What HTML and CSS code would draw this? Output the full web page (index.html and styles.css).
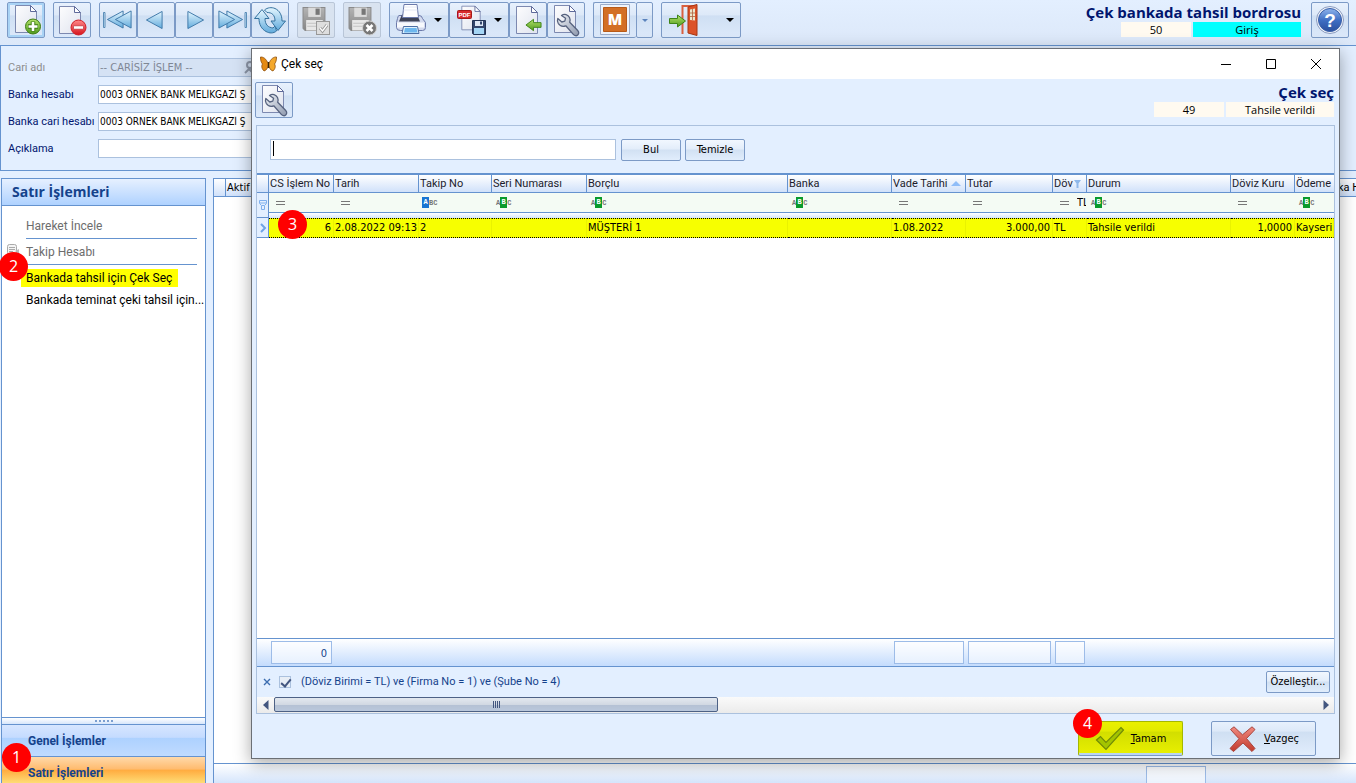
FILE: index.html
```html
<!DOCTYPE html>
<html lang="tr">
<head>
<meta charset="utf-8">
<title>Çek bankada tahsil bordrosu</title>
<link rel="stylesheet" href="styles.css">
</head>
<body>
<svg class="defs" aria-hidden="true">
  <defs>
    <linearGradient id="gPage" x1="0" y1="0" x2="1" y2="1"><stop offset="0" stop-color="#fdfdfe"/><stop offset="1" stop-color="#dfe3ee"/></linearGradient>
    <linearGradient id="gBlue" x1="0" y1="0" x2="0" y2="1"><stop offset="0" stop-color="#e4f6ff"/><stop offset="1" stop-color="#62abdc"/></linearGradient>
    <linearGradient id="gGreen" x1="0" y1="0" x2="0" y2="1"><stop offset="0" stop-color="#b4e36a"/><stop offset="1" stop-color="#4f9a1c"/></linearGradient>
    <linearGradient id="gRed" x1="0" y1="0" x2="0" y2="1"><stop offset="0" stop-color="#ff8a8a"/><stop offset="1" stop-color="#d6141d"/></linearGradient>
    <linearGradient id="gCross" x1="0" y1="0" x2="0" y2="1"><stop offset="0" stop-color="#f08a80"/><stop offset="1" stop-color="#c23a2c"/></linearGradient>
    <linearGradient id="gSteel" x1="0" y1="0" x2="1" y2="1"><stop offset="0" stop-color="#eef1f6"/><stop offset="1" stop-color="#8e99ae"/></linearGradient>
    <linearGradient id="gHelp" x1="0" y1="0" x2="0" y2="1"><stop offset="0" stop-color="#8fb4ec"/><stop offset=".5" stop-color="#3f6fc4"/><stop offset="1" stop-color="#2a4f9e"/></linearGradient>
    <linearGradient id="gGrey" x1="0" y1="0" x2="0" y2="1"><stop offset="0" stop-color="#b4b4b4"/><stop offset="1" stop-color="#858585"/></linearGradient>
    <symbol id="page" viewBox="0 0 32 32"><path d="M5.500 2.500h15l6 6v21h-21z" fill="url(#gPage)" stroke="#7d89b0"/><path d="M20.500 2.500v6h6z" fill="#fff" stroke="#5f6a9a"/></symbol>
    <symbol id="wrench" viewBox="0 0 32 34"><path d="M13.500 12.500c3-2 6.500-1 8 2 .8 1.700.8 3.300.2 4.800l8 8.200c1.500 1.600 1.200 3.400 0 4.500s-3 1-4.400-.6l-7.500-8.600c-3 1-6 .2-7.600-2.600-.8-1.500-.9-3.300-.4-4.700l4 3.500 3-.8.8-3z" fill="url(#gSteel)" stroke="#56627e" stroke-width="1.300" stroke-linejoin="round"/></symbol>
    <symbol id="disk" viewBox="0 0 24 24"><path d="M1 1h21v22H3l-2-2z" fill="url(#gGrey)" stroke="#8a8a8a"/><path d="M6 1h12v9H6z" fill="#dcdcdc"/><path d="M13 2h4v6h-4z" fill="#777"/><path d="M4 13h16v10H4z" fill="#e8e8e8"/><path d="M5 16h14M5 19h14" stroke="#c2c2c2"/></symbol>
    <symbol id="left" viewBox="0 0 20 20"><path d="M18 1v18L1.500 10z" fill="url(#gBlue)" stroke="#3d77a8" stroke-linejoin="round"/></symbol>
    <symbol id="funnel" viewBox="0 0 8 10"><path d="M.5.500h7v3l-2 2v4h-3v-4l-2-2zM1 3h6M3 5.500h2" fill="none" stroke="#7fb0ee"/></symbol>
    <symbol id="garrow" viewBox="0 0 18 14"><path d="M1 7l8-6v3.500h8v5H9V13z" fill="url(#gGreen)" stroke="#3f8418"/></symbol>
  </defs>
</svg>

<header class="toolbar">
  <div class="tools">
    <button class="tool hot" aria-label="Yeni"><svg viewBox="0 0 36 34"><use href="#page" x="2" y="0" width="32" height="32"/><circle cx="25" cy="23.500" r="7.500" fill="url(#gGreen)" stroke="#3f7d15"/><path d="M25 18.500v10M20 23.500h10" stroke="#3f7d15" stroke-width="4.500"/><path d="M25 19v9M20.500 23.500h9" stroke="#fff" stroke-width="2.600"/></svg></button>
    <button class="tool" aria-label="Sil"><svg viewBox="0 0 36 34"><use href="#page" x="0" y="1" width="32" height="32"/><circle cx="24.500" cy="24.500" r="7.500" fill="url(#gRed)" stroke="#d02028"/><rect x="19.500" y="22.800" width="10" height="3.400" rx=".5" fill="#fff" stroke="#b51820" stroke-width=".6"/></svg></button>
    <div class="group">
      <button class="tool" aria-label="İlk"><svg viewBox="0 0 36 34"><path d="M3.500 9.500h1.500v15H3.500z" fill="#cfeafa" stroke="#3d77a8" stroke-width=".8"/><use href="#left" x="6" y="7" width="19" height="19"/><use href="#left" x="14" y="7" width="19" height="19"/></svg></button>
      <button class="tool" aria-label="Önceki"><svg viewBox="0 0 36 34"><use href="#left" x="7" y="7" width="19" height="20"/></svg></button>
      <button class="tool" aria-label="Sonraki"><svg class="mirror" viewBox="0 0 36 34"><use href="#left" x="7" y="7" width="19" height="20"/></svg></button>
      <button class="tool" aria-label="Son"><svg class="mirror" viewBox="0 0 36 34"><path d="M3.500 9.500h1.500v15H3.500z" fill="#cfeafa" stroke="#3d77a8" stroke-width=".8"/><use href="#left" x="6" y="7" width="19" height="19"/><use href="#left" x="14" y="7" width="19" height="19"/></svg></button>
      <button class="tool" aria-label="Yenile"><svg viewBox="0 0 36 34"><g fill="url(#gBlue)" stroke="#35729f" stroke-linejoin="round"><path d="M2.500 15.500L10 6.500l7 9h-4c0 6 3 9 8 9.500l2-2 1.500 5c-3 2.500-7 2.500-10.500.5-4.500-2.500-7-7-7-13z"/><path d="M33.500 18L26 27.500 19 18h4c0-6-3-8.500-8-8.500L12.500 7c3-2.500 7-3 10.500-1.500 4.500 2 7 6.500 7 12.500z"/></g></svg></button>
    </div>
    <button class="tool" disabled aria-label="Kaydet"><svg viewBox="0 0 36 34"><use href="#disk" x="4" y="3" width="25" height="26"/><rect x="18.500" y="18.500" width="13" height="13" fill="#dedede" stroke="#999"/><path d="M22 25l2.500 3 4.500-6" fill="none" stroke="#999" stroke-width="3"/><path d="M22 25l2.500 3 4.500-6" fill="none" stroke="#fff" stroke-width="1.300"/></svg></button>
    <button class="tool" disabled aria-label="Vazgeç"><svg viewBox="0 0 36 34"><use href="#disk" x="4" y="3" width="25" height="26"/><circle cx="25.500" cy="25" r="7" fill="#777" stroke="#d0d0d0"/><path d="M22.500 22l6 6M28.500 22l-6 6" stroke="#fff" stroke-width="2.600"/></svg></button>
    <div class="group">
      <button class="tool drop" aria-label="Yazdır"><svg viewBox="0 0 36 34"><path d="M9 12.500h20q3 0 3.500 3l3 4v5q0 3-3 3h-22q-4 0-4-3v-5l1-4q.5-3 1.500-3z" fill="#d3daee" stroke="#6c7aaa"/><path d="M12 11.500h15l3 7H9z" fill="#3e4356"/><path d="M14 1.500h13l1.500 13h-16z" fill="#fff" stroke="#6c7aaa"/><path d="M14 4h13M13.500 7h14" stroke="#e4e8f3"/><path d="M7 19.500h27v5H7z" fill="#f7f9fd"/><path d="M13.500 23.500h14l1.500 7h-17z" fill="#dff1fd" stroke="#4c6ea3"/><path d="M15 25h11.500l1 4.500h-13.500z" fill="#6db7ee"/></svg><i class="caret"></i></button>
      <button class="tool drop" aria-label="PDF kaydet"><svg viewBox="0 0 36 34"><use href="#page" x="7" y="0" width="28" height="30"/><rect x="7.500" y="7.500" width="14" height="8" rx="1" fill="#d92c2c" stroke="#a61818"/><text class="pdf" x="8.500" y="14">PDF</text><path d="M22.500 17.500h13v14h-12l-1-1z" fill="#33456b" stroke="#223354"/><path d="M25 18h8v5h-8z" fill="#dfe8f5"/><path d="M30 18.500h2v3h-2z" fill="#33456b"/><path d="M24 25h10v6H24z" fill="#a5d6f5"/></svg><i class="caret"></i></button>
      <button class="tool" aria-label="İçe al"><svg viewBox="0 0 36 34"><use href="#page" x="1" y="1" width="32" height="32"/><use href="#garrow" x="15" y="15" width="17" height="14"/></svg></button>
      <button class="tool" aria-label="Ayarlar"><svg viewBox="0 0 36 34"><use href="#page" x="1" y="0" width="32" height="32"/><use href="#wrench" x="0" y="0" width="32" height="34"/></svg></button>
    </div>
    <div class="group">
      <button class="tool split" aria-label="M"><svg viewBox="0 0 36 34"><path d="M3.500 1.500h29v30h-29z" fill="#eef3fb" stroke="#9dacc8"/><path d="M6.500 4.500h23v24h-23z" fill="#d36f25" stroke="#b85a18"/><text class="mlogo" x="18" y="22" text-anchor="middle">M</text></svg></button>
      <button class="tool arrow" aria-label="Seçenekler"><i class="caret blue"></i></button>
    </div>
    <button class="tool drop exit" aria-label="Çıkış"><svg viewBox="0 0 36 34"><path d="M20.500 31V3H34" fill="none" stroke="#d96040" stroke-width="2"/><path d="M26 4l9-2.500v31L26 30z" fill="#dc5228" stroke="#a83612"/><path d="M28 6.500l5-1v12l-5-.5z" fill="#ece6cc"/><path d="M30.500 6v11M28 10h5M28 13.500h5" stroke="#b0623d" stroke-width=".8"/><path d="M23.500 18l-8-6v3.500h-8v5h8V24z" fill="url(#gGreen)" stroke="#3f8418"/></svg><i class="caret"></i></button>
  </div>
  <div class="status">
    <h1 class="title">Çek bankada tahsil bordrosu</h1>
    <div class="tags"><span class="tag num">50</span><span class="tag cyan">Giriş</span></div>
  </div>
  <button class="tool help" aria-label="Yardım"><svg viewBox="0 0 36 34"><circle cx="18" cy="17" r="13.500" fill="#f2f5fa" stroke="#8a9bc0"/><circle cx="18" cy="17" r="11.500" fill="url(#gHelp)" stroke="#3a5fa8"/><text class="qmark" x="18" y="24" text-anchor="middle">?</text></svg></button>
</header>

<form class="form">
  <label class="off" for="f1">Cari adı</label>
  <div class="field"><input id="f1" class="wide" disabled value="-- CARİSİZ İŞLEM --"><svg class="lookup" viewBox="0 0 12 14"><circle cx="6" cy="4" r="3" fill="none" stroke="#8d97a8" stroke-width="2"/><path d="M1 12l4-4 5 5" fill="none" stroke="#8d97a8" stroke-width="2"/></svg></div>
  <label for="f2">Banka hesabı</label>
  <div class="field"><input id="f2" value="0003 ÖRNEK BANK MELİKGAZİ Ş"></div>
  <label for="f3">Banka cari hesabı</label>
  <div class="field"><input id="f3" value="0003 ÖRNEK BANK MELİKGAZİ Ş"></div>
  <label for="f4">Açıklama</label>
  <div class="field"><input id="f4"></div>
</form>

<main class="work">
  <nav class="side">
    <h2 class="side-head">Satır İşlemleri</h2>
    <ul class="menu">
      <li class="item ruled"><button class="link" disabled>Hareket İncele</button></li>
      <li class="item ruled"><svg class="note" viewBox="0 0 14 14"><rect x="1.500" y="1.500" width="9" height="10" rx="2" fill="#f4f4f4" stroke="#aaa"/><path d="M3 4.500h6M3 6.500h6M3 8.500h4" stroke="#aaa"/><path d="M9 8l4-2v5z" fill="#bbb"/></svg><button class="link" disabled>Takip Hesabı</button></li>
      <li class="item"><button class="link marked">Bankada tahsil için Çek Seç</button><span class="badge b2">2</span></li>
      <li class="item"><button class="link">Bankada teminat çeki tahsil için...</button></li>
    </ul>
    <div class="grip"><i></i><i></i><i></i><i></i><i></i></div>
    <button class="tab">Genel İşlemler</button>
    <button class="tab active">Satır İşlemleri<span class="badge b1">1</span></button>
  </nav>
  <section class="back-grid">
    <div class="back-head"><span class="cell"></span><span class="cell grow">Aktif</span><span class="cell last">ka H</span></div>
    <div class="back-body"></div>
    <div class="back-foot"><span class="sum"></span></div>
  </section>
</main>

<section class="dialog" role="dialog" aria-label="Çek seç">
  <div class="caption">
    <svg class="fly" viewBox="0 0 17 16"><path d="M8 7.500C6.500 3 3.500.8.500 1c0 3 .6 5.500 2 7C1 10.500 2 13 4 15c2.500-.5 4-3.500 4.200-6z" fill="#e58a12" stroke="#8a4a08" stroke-width=".8"/><path d="M9 7.500C10.500 3 13.500.8 16.500 1c0 3-.6 5.500-2 7 1.500 2.500.5 5-1.500 7-2.500-.5-4-3.500-4.200-6z" fill="#f4a82b" stroke="#8a4a08" stroke-width=".8"/><path d="M8.500 6v6" stroke="#3a2408" stroke-width="1.200"/></svg>
    <span class="cap-text">Çek seç</span>
    <button class="win" aria-label="Küçült"><svg viewBox="0 0 12 12"><path d="M1 6.500h10" stroke="#000"/></svg></button>
    <button class="win" aria-label="Büyüt"><svg viewBox="0 0 12 12"><path d="M1.500 1.500h9v9h-9z" fill="none" stroke="#000"/></svg></button>
    <button class="win" aria-label="Kapat"><svg viewBox="0 0 12 12"><path d="M1 1l10 10M11 1L1 11" stroke="#000"/></svg></button>
  </div>
  <div class="dlg-tools">
    <button class="tool" aria-label="Ayarlar"><svg viewBox="0 0 36 34"><use href="#page" x="1" y="0" width="32" height="32"/><use href="#wrench" x="0" y="0" width="32" height="34"/></svg></button>
    <div class="status">
      <h2 class="title">Çek seç</h2>
      <div class="tags"><span class="tag num">49</span><span class="tag">Tahsile verildi</span></div>
    </div>
  </div>
  <div class="panel">
    <form class="search">
      <input class="query" aria-label="Ara"><span class="cursor"></span>
      <button class="btn" type="button">Bul</button>
      <button class="btn" type="button">Temizle</button>
    </form>
    <div class="grid">
      <table class="table">
        <colgroup><col class="c0"><col class="c1"><col class="c2"><col class="c3"><col class="c4"><col class="c5"><col class="c6"><col class="c7"><col class="c8"><col class="c9"><col class="c10"><col class="c11"><col></colgroup>
        <thead>
          <tr class="heads"><th></th><th>CS İşlem No</th><th>Tarih</th><th>Takip No</th><th>Seri Numarası</th><th>Borçlu</th><th>Banka</th><th><span class="sorted">Vade Tarihi<i class="up"></i></span></th><th>Tutar</th><th><span class="sorted">Döv<svg class="mini" viewBox="0 0 8 10"><path d="M0 1h7L4.500 4.500V9h-2V4.500z" fill="#8fb8ea"/></svg></span></th><th>Durum</th><th>Döviz Kuru</th><th>Ödeme</th></tr>
          <tr class="filters"><td class="ind" rowspan="2"><svg class="fun" viewBox="0 0 8 10"><use href="#funnel"/></svg></td><td><i class="eq"></i></td><td><i class="eq"></i></td><td><span class="abc first"><b>A</b>BC</span></td><td><span class="abc">A<b>B</b>C</span></td><td><span class="abc">A<b>B</b>C</span></td><td><span class="abc">A<b>B</b>C</span></td><td><i class="eq"></i></td><td><i class="eq"></i></td><td><span class="pair"><i class="eq"></i><span class="cut">TL</span></span></td><td><span class="abc">A<b>B</b>C</span></td><td><i class="eq"></i></td><td><span class="abc">A<b>B</b>C</span></td></tr>
          <tr class="gap"><td colspan="12"></td></tr>
        </thead>
        <tbody>
          <tr class="row"><td class="ind"><svg class="chev" viewBox="0 0 8 10"><path d="M2 1l4 4-4 4" fill="none" stroke="#6fa3e6" stroke-width="2"/></svg></td><td class="r host">6<span class="badge b3">3</span></td><td>2.08.2022 09:13</td><td>2</td><td></td><td>MÜŞTERİ 1</td><td></td><td>1.08.2022</td><td class="r">3.000,00</td><td>TL</td><td>Tahsile verildi</td><td class="r">1,0000</td><td>Kayseri</td></tr>
        </tbody>
      </table>
    </div>
    <div class="totals"><output class="sum t1">0</output><output class="sum t7"></output><output class="sum t8"></output><output class="sum t9"></output></div>
    <div class="filterbar">
      <button class="clear" aria-label="Süzgeci kaldır"><svg viewBox="0 0 8 8"><path d="M1 1l6 6M7 1L1 7" stroke="#3c6db0" stroke-width="1.400"/></svg></button>
      <input class="check" type="checkbox" id="flt" checked>
      <label for="flt">(Döviz Birimi = TL) ve (Firma No = 1) ve (Şube No = 4)</label>
      <button class="btn custom">Özelleştir...</button>
    </div>
    <div class="scroll">
      <button class="sbtn" aria-label="Sola"><svg viewBox="0 0 6 10"><path d="M5.500 0v10L0 5z" fill="#43567f"/></svg></button>
      <div class="track"><div class="thumb"><i></i><i></i><i></i><i></i></div></div>
      <button class="sbtn" aria-label="Sağa"><svg viewBox="0 0 6 10"><path d="M.5 0v10L6 5z" fill="#43567f"/></svg></button>
    </div>
  </div>
  <footer class="actions">
    <button class="big ok"><svg viewBox="0 0 30 26"><path d="M1.500 14l4-3.500 5.500 6L26 1.500 28.500 4 11 23.500z" fill="#a3c400" stroke="#6f8a06" stroke-width="1.200"/></svg><span><u>T</u>amam</span><span class="badge b4">4</span></button>
    <button class="big"><svg viewBox="0 0 30 26"><path d="M2.500 3.500L6 .8l8.500 8L24 .8l3 2.700-8.500 9L27 22.500 24 25.500 15 17l-9.500 8.500-3.500-3 9-9.800z" fill="url(#gCross)" stroke="#a8463f"/></svg><span><u>V</u>azgeç</span></button>
  </footer>
</section>
</body>
</html>
```
FILE: styles.css
```css
:root {
  --line: #6593cf;
  --pale: #e3efff;
  --soft: #abc1de;
  --ui: "DejaVu Sans Condensed", "Noto Sans", sans-serif;
  --narrow: Roboto, "Noto Sans", sans-serif;
  --seg: "Open Sans", "Noto Sans", sans-serif;
}
* { box-sizing: border-box; }
body {
  margin: 0;
  height: 100vh;
  overflow: hidden;
  display: flex;
  flex-direction: column;
  position: relative;
  background: var(--pale);
  color: #000;
  font: 11px/14px var(--ui);
}
button, input { font: inherit; color: inherit; margin: 0; padding: 0; }
h1, h2, ul { margin: 0; padding: 0; list-style: none; }
svg { display: block; flex: none; }
.defs { position: absolute; width: 0; height: 0; }

.toolbar {
  display: flex;
  align-items: flex-start;
  height: 46px;
  padding: 2px 7px 0;
  border-bottom: 1px solid var(--line);
  background: linear-gradient(#e3efff, #dce8f9);
}
.tools { display: flex; gap: 8px; flex: 1; }
.group { display: flex; }
.tool {
  width: 38px;
  height: 36px;
  display: flex;
  align-items: center;
  border: 1px solid #7c9ac6;
  border-radius: 2px;
  background: linear-gradient(#e8f1fd 0%, #dde9f8 35%, #cfdff3 38%, #dce9fa 100%);
}
.tool svg { width: 36px; height: 34px; }
.tool:disabled { border-color: #b9c6d8; background: #d9e3f0; }
.tool.hot { box-shadow: inset 0 0 0 2px #a9d3f5; }
.tool.drop { width: 60px; justify-content: space-between; padding-right: 6px; }
.tool.exit { width: 80px; }
.tool.split { width: 43px; justify-content: center; border-right: 0; }
.tool.arrow { width: 17px; justify-content: center; }
.mirror { transform: scaleX(-1); }
.caret { border: 4px solid transparent; border-top-color: #000; border-bottom: 0; }
.caret.blue { border-width: 3px 3px 0; border-top-color: #5b83bd; }
.pdf { font: bold 6px "Liberation Sans", sans-serif; fill: #fff; }
.mlogo { font: 800 15px "Open Sans", sans-serif; fill: #fff; }
.qmark { font: bold 19px "Liberation Sans", sans-serif; fill: #fff; }
.status { display: flex; flex-direction: column; align-items: flex-end; }
.title { font: bold 15px/20px var(--seg); color: #00156e; }
.tags { display: flex; gap: 2px; }
.tag { width: 108px; height: 15px; line-height: 15px; background: #fffaf0; text-align: center; font-family: var(--seg); }
.tag.num { width: 70px; }
.tag.cyan { background: #0ff; }
.toolbar .help { margin-left: 10px; }

.form {
  display: grid;
  grid-template-columns: 90px 170px;
  gap: 8px 0;
  padding: 12px 7px;
  border: solid var(--line);
  border-width: 0 0 1px 1px;
  font-family: var(--narrow);
  color: #00156e;
}
.form label { line-height: 19px; white-space: nowrap; }
.form .off { color: #8d8d8d; }
.field { position: relative; height: 19px; }
.field input { width: 100%; height: 19px; border: 1px solid var(--soft); padding: 0 1px; background: #fff; color: #000; font: 10px var(--ui); }
.field .wide { font-size: 11px; }
.field input:disabled { background: #d5e2f4; color: #7f8794; }
.lookup { position: absolute; right: 12px; top: 3px; width: 12px; height: 14px; }

.work { flex: 1; min-height: 0; display: flex; gap: 7px; padding-top: 7px; }
.side {
  width: 205px;
  display: flex;
  flex-direction: column;
  background: #fff;
  border: 1px solid var(--line);
  border-bottom: 0;
  margin-left: 1px;
}
.side-head {
  height: 27px;
  padding-left: 10px;
  font: bold 14px/26px var(--seg);
  color: #15428b;
  border-bottom: 1px solid var(--line);
  background: linear-gradient(#e6f0ff, #afd2ff);
}
.menu { flex: 1; padding: 7px 5px 0 24px; }
.item { position: relative; height: 23px; }
.item.ruled { height: 26px; margin-right: 3px; border-bottom: 1px solid var(--line); }
.link { border: 0; background: none; height: 25px; font: 12px/25px var(--narrow); white-space: nowrap; }
.ruled .link { line-height: 27px; }
.link:disabled { color: #6d6d6d; }
.link.marked { height: 18px; line-height: 19px; margin: 4px 0 0 -5px; padding: 0 6px 0 5px; background: #ff0; }
.note { position: absolute; left: -20px; top: 4px; width: 14px; height: 14px; }
.grip { height: 7px; display: flex; justify-content: center; align-items: center; gap: 2px; border-top: 1px solid var(--line); background: linear-gradient(#fff, #d7e6fb); }
.grip i { width: 2px; height: 2px; background: #7c9fd0; }
.tab {
  position: relative;
  height: 32px;
  text-align: left;
  padding-left: 26px;
  border: 0;
  border-top: 1px solid var(--line);
  font: bold 12px/32px var(--narrow);
  color: #15428b;
  background: linear-gradient(#d7e6ff 0%, #c4dbff 40%, #add1ff 42%, #c0dbff 100%);
}
.tab.active { height: 27px; background: linear-gradient(#ffd9aa 0%, #ffbb6e 47%, #ffab3f 50%, #fedc75 100%); }

.back-grid { flex: 1; display: flex; flex-direction: column; background: #fff; border: 1px solid var(--line); border-width: 1px 0 0 1px; }
.back-head { display: flex; height: 18px; }
.cell { width: 12px; border: solid var(--line); border-width: 0 1px 1px 0; background: linear-gradient(#fff, #d0e1fa); line-height: 18px; padding-left: 1px; white-space: nowrap; overflow: hidden; }
.cell.grow { flex: 1; border-right: 0; }
.cell.last { width: 18px; padding: 0; border-right: 0; font-family: var(--narrow); }
.back-body { flex: 1; }
.back-foot { height: 20px; display: flex; justify-content: flex-end; padding: 2px 150px 0 0; border-top: 1px solid var(--line); background: linear-gradient(#fff, #d5e5fc); overflow: hidden; }
.back-foot .sum { width: 60px; }

.badge {
  position: absolute;
  z-index: 2;
  width: 29px;
  height: 29px;
  border-radius: 50%;
  background: #f00;
  color: #fff;
  font: 16px/29px var(--seg);
  text-align: center;
}
.b1 { left: 0; top: -14px; }
.b2 { left: -27px; top: -13px; }
.b3 { left: 9px; top: -9px; }
.b4 { left: -6px; top: -13px; }

.dialog {
  position: absolute;
  z-index: 1;
  left: 251px;
  right: 16px;
  top: 48px;
  bottom: 24px;
  display: flex;
  flex-direction: column;
  border: 1px solid #6b6f75;
  background: var(--pale);
  box-shadow: 0 4px 16px rgba(0, 0, 0, .35);
}
.caption { display: flex; align-items: center; height: 30px; background: #fff; padding: 0 1px 0 8px; }
.fly { width: 17px; height: 16px; }
.cap-text { flex: 1; margin-left: 4px; font: 12px/28px var(--narrow); }
.win { width: 45px; height: 29px; border: 0; background: none; display: flex; align-items: center; justify-content: center; }
.win svg { width: 12px; height: 12px; }
.dlg-tools { display: flex; justify-content: space-between; height: 46px; padding: 3px 5px 0 3px; }
.panel { flex: 1; min-height: 0; display: flex; flex-direction: column; margin: 0 4px; border: 1px solid var(--soft); }
.search { position: relative; display: flex; gap: 4px; height: 47px; padding: 13px 13px 0; }
.query { width: 346px; height: 21px; margin-right: 1px; border: 1px solid var(--soft); padding: 0 3px; background: #fff; }
.cursor { position: absolute; left: 16px; top: 15px; width: 1px; height: 15px; background: #000; }
.btn { width: 60px; height: 22px; border: 1px solid #7c9ac6; border-radius: 2px; background: linear-gradient(#f1f7ff 0%, #e3edfa 45%, #d2e1f3 50%, #e1edfc 100%); }

.grid { flex: 1; min-height: 0; border-top: 2px solid var(--line); background: #fff; }
.table { width: 100%; table-layout: fixed; border-collapse: separate; border-spacing: 0; }
.c0 { width: 12px; } .c1 { width: 65px; } .c2 { width: 85px; } .c3 { width: 73px; }
.c4 { width: 95px; } .c5 { width: 201px; } .c6 { width: 104px; } .c7 { width: 74px; }
.c8 { width: 87px; } .c9 { width: 34px; } .c10 { width: 144px; } .c11 { width: 64px; }
.table th, .table td { padding: 0 1px; white-space: nowrap; text-align: left; font-weight: normal; }
.table th { height: 18px; overflow: hidden; line-height: 17px; font-family: var(--narrow); border: solid var(--line); border-width: 0 1px 1px 0; background: linear-gradient(#fff, #d0e1fa); color: #1c1c2c; }
.table th:last-child { border-right: 0; }
.sorted { display: flex; align-items: center; justify-content: space-between; padding-right: 3px; }
.up { border: 5px solid transparent; border-bottom-color: #8fbdf8; border-top: 0; }
.mini { width: 8px; height: 10px; }
.filters td { height: 20px; background: #f4fbf4; border: solid var(--line); border-width: 0 0 1px; overflow: hidden; }
.table .ind { padding: 0 2px; border: solid var(--line); border-width: 0 1px 1px 0; background: var(--pale); }
.fun { width: 8px; height: 10px; }
.chev { width: 8px; height: 10px; }
.gap td { height: 5px; background: linear-gradient(#fff, #d5e5fc); }
.eq { display: block; flex: none; width: 9px; height: 4px; margin-left: 6px; border: solid #777; border-width: 1px 0; }
.pair { display: flex; align-items: center; gap: 8px; }
.cut { width: 9px; overflow: hidden; }
.abc { display: flex; align-items: center; margin-left: 3px; font: bold 7px/10px "Liberation Mono", monospace; color: #777; }
.abc b { background: #0a9a2c; color: #fff; width: 7px; height: 11px; text-align: center; }
.abc.first b { background: #1976d2; }
.abc.first { margin-left: 2px; }
.row td { height: 20px; background: #f7ff00; border: dotted #000; border-width: 1px 0; line-height: 18px; }
.row td + td { border-right: 1px solid #eaf200; }
.table .r { text-align: right; padding-right: 2px; }
.row .host { position: relative; }

.sum { height: 23px; line-height: 23px; border: 1px solid #9dbce8; background: rgba(255, 255, 255, .55); color: #15428b; text-align: right; padding-right: 4px; }
.totals {
  display: grid;
  grid-template-columns: 12px 65px 85px 73px 95px 201px 104px 74px 87px 34px 144px 64px 1fr;
  padding-top: 2px;
  height: 29px;
  border: solid var(--line);
  border-width: 1px 0;
  background: linear-gradient(#fff, #c4dcfd);
}
.totals .sum { margin: 0 2px; }
.t1 { grid-column: 2; } .t7 { grid-column: 8; } .t8 { grid-column: 9; } .t9 { grid-column: 10; }
.filterbar { display: flex; align-items: center; height: 30px; padding: 0 4px 0 6px; color: #15428b; }
.filterbar label { flex: 1; font-family: var(--narrow); }
.clear { width: 8px; height: 8px; border: 0; background: none; }
.clear svg { width: 8px; height: 8px; }
.check { appearance: none; width: 12px; height: 12px; margin: 0 10px 0 8px; border: 1px solid var(--soft); background: #e8eef6; position: relative; }
.check:checked::after { content: ""; position: absolute; left: 3px; top: 0; width: 4px; height: 8px; border: solid #43567f; border-width: 0 2px 2px 0; transform: rotate(40deg); }
.custom { width: 64px; color: #000; }
.scroll { display: flex; height: 16px; background: linear-gradient(#fafafa, #ebebeb); }
.sbtn { width: 17px; border: 0; background: none; display: flex; align-items: center; justify-content: center; }
.sbtn svg { width: 6px; height: 10px; }
.track { flex: 1; }
.thumb { width: 42.6%; height: 15px; display: flex; align-items: center; justify-content: center; gap: 1px; border: 1px solid #4d6185; border-radius: 2px; background: linear-gradient(#e3e8ef 0%, #d2d9e3 50%, #b5c1d4 55%, #bac8dc 100%); }
.thumb i { width: 1px; height: 7px; background: #43567f; }

.actions { display: flex; justify-content: flex-end; gap: 28px; padding: 7px 23px 2px; }
.big { position: relative; display: flex; align-items: center; justify-content: center; gap: 6px; width: 105px; height: 35px; border: 1px solid #7c9ac6; border-radius: 2px; background: linear-gradient(#e8f1fd 0%, #dde9f8 28%, #cfdff2 30%, #e1edfc 100%); }
.big svg { width: 30px; height: 26px; }
.ok { border-color: #a5b800; border-bottom-color: #7c9ac6; box-shadow: inset 0 -2px #b9d4f2; background: linear-gradient(#eaf000 0%, #e2ea00 28%, #d2de00 30%, #e9f000 100%); }
```
